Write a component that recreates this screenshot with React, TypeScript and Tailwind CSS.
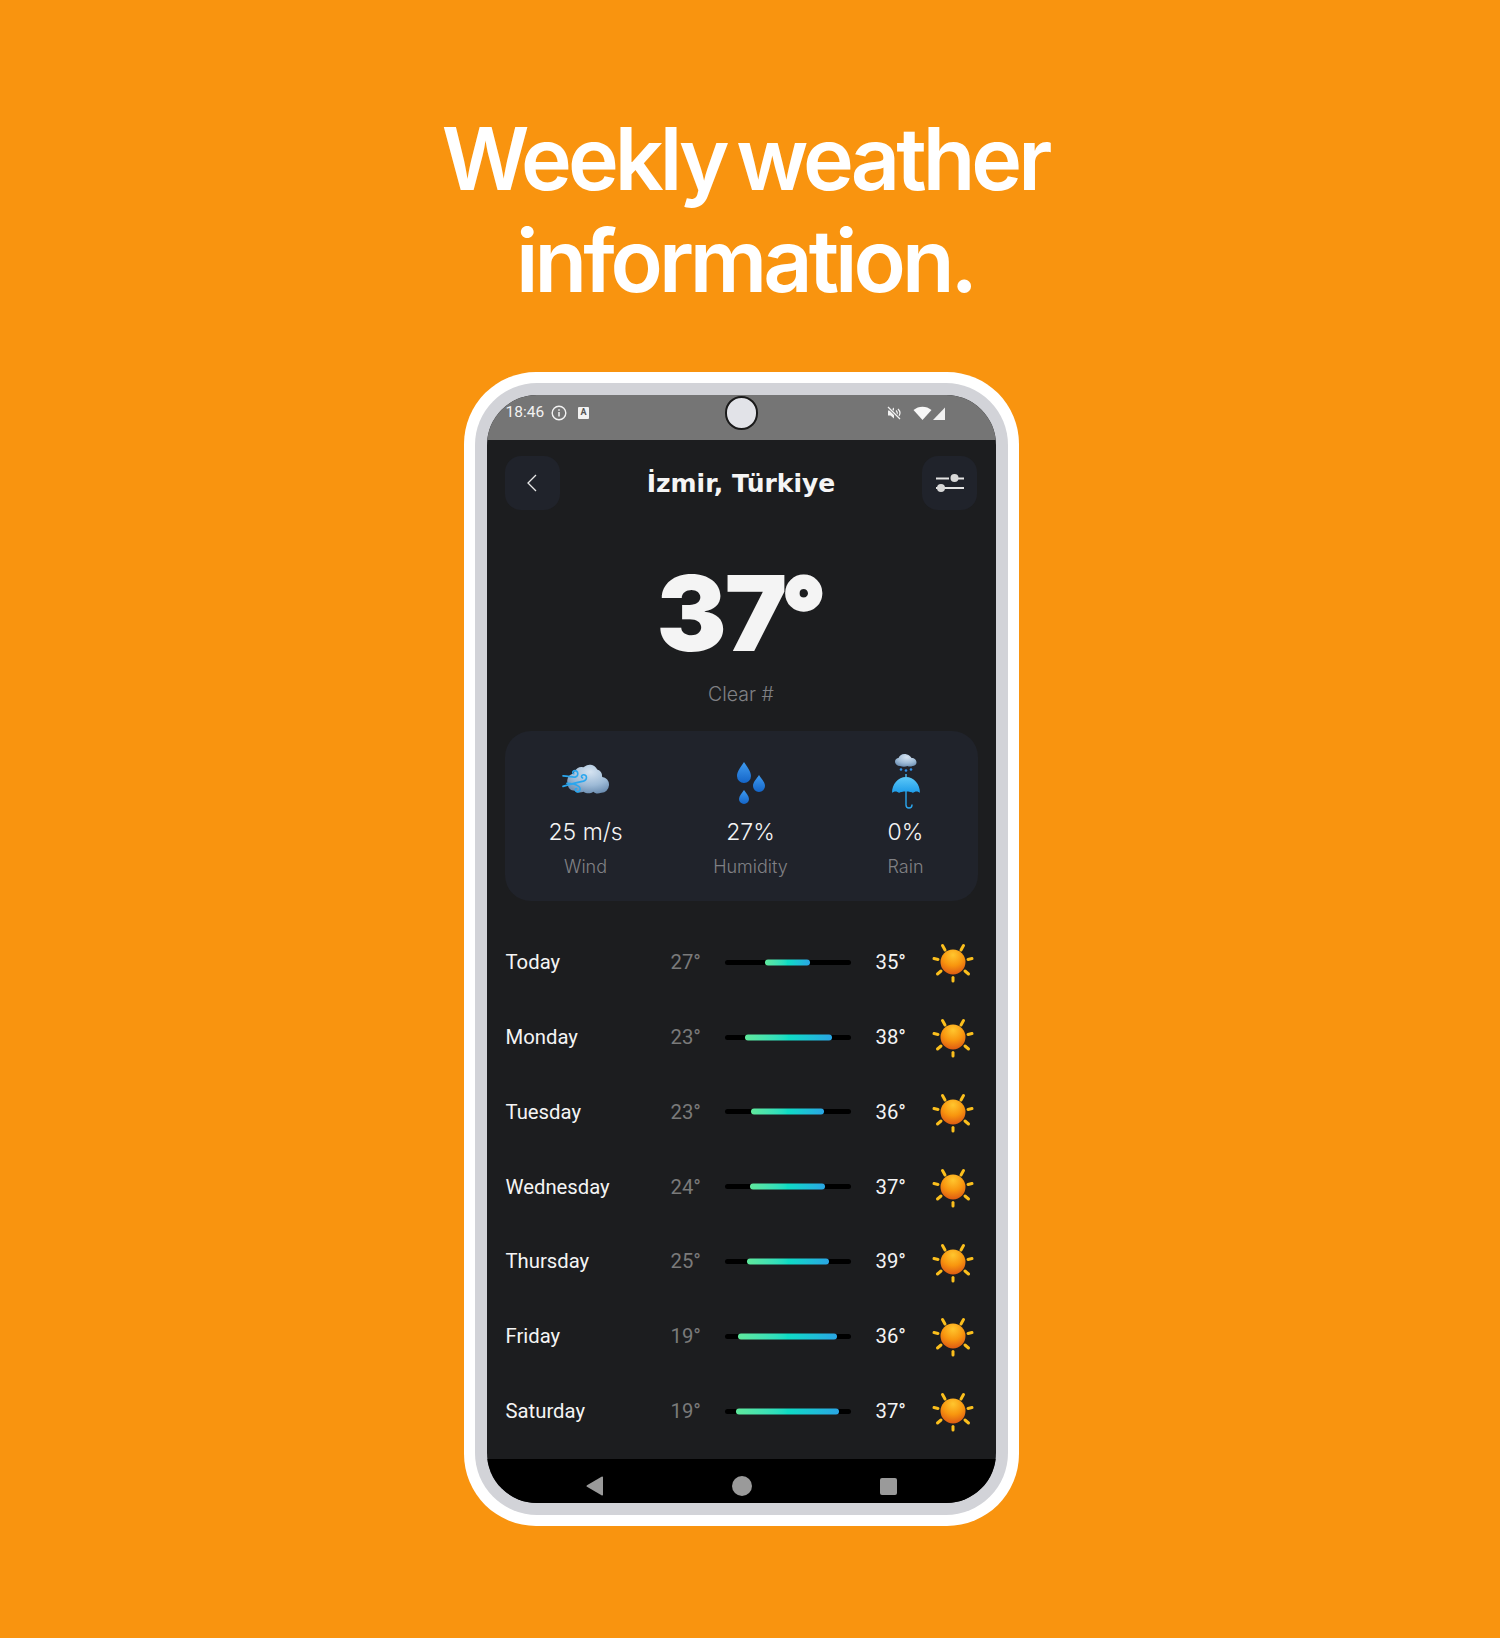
const days = [
  { name: "Today", min: "27°", max: "35°", from: 32.5, to: 68 },
  { name: "Monday", min: "23°", max: "38°", from: 16, to: 85 },
  { name: "Tuesday", min: "23°", max: "36°", from: 21, to: 79 },
  { name: "Wednesday", min: "24°", max: "37°", from: 20, to: 80 },
  { name: "Thursday", min: "25°", max: "39°", from: 17.5, to: 83 },
  { name: "Friday", min: "19°", max: "36°", from: 11, to: 89.5 },
  { name: "Saturday", min: "19°", max: "37°", from: 9, to: 91 },
];

const Gradients = () => (
  <svg width="0" height="0" className="absolute">
    <defs>
      <radialGradient id="sunFill" cx="0.5" cy="0.22" r="0.85">
        <stop offset="0" stopColor="#ffc62e" />
        <stop offset="0.5" stopColor="#f8960f" />
        <stop offset="1" stopColor="#d94f14" />
      </radialGradient>
      <radialGradient id="cloudFill" cx="0.55" cy="0.25" r="0.85">
        <stop offset="0" stopColor="#d5e3f1" />
        <stop offset="0.55" stopColor="#9dbad6" />
        <stop offset="1" stopColor="#5f82a8" />
      </radialGradient>
      <linearGradient id="dropFill" x1="0" y1="0" x2="0" y2="1">
        <stop offset="0" stopColor="#3f9bf0" />
        <stop offset="1" stopColor="#1465c8" />
      </linearGradient>
      <linearGradient id="umbrellaFill" x1="0" y1="0" x2="0" y2="1">
        <stop offset="0" stopColor="#5cc8f8" />
        <stop offset="1" stopColor="#1d9be8" />
      </linearGradient>
    </defs>
  </svg>
);

const Sun = () => (
  <svg width="42" height="42" viewBox="0 0 42 42" fill="none">
    <g stroke="#fbbf1d" strokeWidth="3" strokeLinecap="round">
      <path d="M21 36.500V40" />
      <path d="M10.500 4.500L13 9" />
      <path d="M31.500 4.500L29 9" />
      <path d="M2 17.500L6 18.500" />
      <path d="M40 17.500L36 18.500" />
      <path d="M5.500 33L9 30" />
      <path d="M36.500 33L33 30" />
    </g>
    <circle cx="21" cy="21" r="12.500" fill="url(#sunFill)" />
  </svg>
);

const WindCloud = () => (
  <svg className="mb-[5px]" width="47" height="36" viewBox="0 0 48 34" fill="none" preserveAspectRatio="none">
    <path d="M6 22a7 7 0 0 1 6-10 8 8 0 0 1 10-6 9 9 0 0 1 14 2 7 7 0 0 1 5 7 7.500 7.500 0 0 1-1 15c-3 1-6 1-8-1-3 2-7 2-10 0-3 1-7 1-9-1-4 0-7-2-7-6z" fill="url(#cloudFill)" />
    <g stroke="#2aa6ee" strokeWidth="1.600" strokeLinecap="round">
      <path d="M1 14c6 0 10 2 13 1 3-1 3-6-1-6-2 0-3 2-1 3" />
      <path d="M1 24c6-2 16-4 21-5 4-1 4-6 0-6-2 0-3 2-1 3" />
      <path d="M5 21c6 0 9 1 12 3 3 2 1 6-2 5-2-1-2-3 0-3" />
    </g>
  </svg>
);

const Drops = () => (
  <svg className="mt-[4px]" width="30" height="44" viewBox="0 0 30 44" fill="url(#dropFill)">
    <path d="M8 1c3 5 7 9 7 14a7 7 0 0 1-14 0C1 10 5 6 8 1z" />
    <path d="M23 14c2.500 4 6 7 6 11a6 6 0 0 1-12 0c0-4 3.500-7 6-11z" />
    <path d="M8 29c2 3 5 6 5 9a5 5 0 0 1-10 0c0-3 3-6 5-9z" />
  </svg>
);

const Umbrella = () => (
  <svg width="30" height="56" viewBox="0 0 30 56" fill="none">
    <path d="M9 13c-3 0-5-2-5-4.500 0-2 2-3.500 3.500-3.500C8.500 2 12 0 16 1.500c2 .5 4 2 4.500 3.500 3 0 5 2 5 4.500 0 2-2 3.500-4 3.500-2 1-4 .5-5 0-2 1-5 1-7.500 0z" fill="url(#cloudFill)" />
    <g fill="#2f8fe8">
      <circle cx="10" cy="16.500" r="1.300" />
      <circle cx="15" cy="17.500" r="1.300" />
      <circle cx="20" cy="16.500" r="1.300" />
    </g>
    <path d="M15 21v3" stroke="#4bb9f4" strokeWidth="1.400" />
    <path d="M1 40c0-9 6-16 14-16s14 7 14 16c-2-2-5-2-7 0-2-2-12-2-14 0-2-2-5-2-7 0z" fill="url(#umbrellaFill)" />
    <path d="M15 38v14c0 4 6 4 6 0" stroke="#2aa6ee" strokeWidth="1.400" strokeLinecap="round" />
  </svg>
);

const StatusBar = () => (
  <div className="relative h-[45px] bg-[#757575] flex items-center pl-[19px] pr-[50px] pb-[10px] text-white font-['Roboto',sans-serif]">
    <span className="text-[15.500px] text-[#f2f2f2]">18:46</span>
    <svg className="ml-[7px]" width="16" height="16" viewBox="0 0 16 16" fill="none">
      <circle cx="8" cy="8" r="6.800" stroke="#f2f2f2" strokeWidth="1.400" />
      <path d="M8 7v4.500M8 4.200v1.500" stroke="#f2f2f2" strokeWidth="1.500" />
    </svg>
    <div className="ml-[11px] w-[11px] h-[12px] bg-[#f2f2f2] rounded-[1px] flex items-center justify-center text-[9px] leading-none font-bold text-[#555]">
      A
    </div>
    <div className="ml-auto flex items-center">
      <svg width="16" height="16" viewBox="0 0 16 16" fill="#f2f2f2">
        <path d="M2 5.500h2.500L8 2.500v11l-3.500-3H2z" />
        <path d="M10 5.500c1.500 1.500 1.500 3.500 0 5M12 4c2.500 2.500 2.500 5.500 0 8" stroke="#f2f2f2" strokeWidth="1.200" fill="none" />
        <path d="M2 2l12 12" stroke="#757575" strokeWidth="3" />
        <path d="M2 2l12 12" stroke="#f2f2f2" strokeWidth="1.200" />
      </svg>
      <svg className="ml-[11px]" width="19" height="14" viewBox="0 0 19 14" fill="#f8f8f8">
        <path d="M0.500 4C5.500-.5 13.500-.5 18.500 4L9.500 14z" />
      </svg>
      <svg className="ml-[1px]" width="13" height="14" viewBox="0 0 13 14" fill="#f2f2f2">
        <path d="M0 14L12 1.500V14z" />
      </svg>
    </div>
  </div>
);

const Header = () => (
  <div className="mt-[16px] px-[18px] flex items-center justify-between">
    <button className="w-[55px] h-[54px] rounded-[16px] bg-[#20232b] flex items-center justify-center">
      <svg width="14" height="20" viewBox="0 0 14 20" fill="none">
        <path d="M11 2L3 10l8 8" stroke="#e8e8e8" strokeWidth="1.300" />
      </svg>
    </button>
    <h2 className="font-['DejaVu_Sans',sans-serif] font-bold text-[25px] leading-none text-[#f5f5f5]">
      İzmir, Türkiye
    </h2>
    <button className="w-[55px] h-[54px] rounded-[16px] bg-[#20232b] flex items-center justify-center">
      <svg width="30" height="22" viewBox="0 0 30 22" fill="none">
        <path d="M1 6.500h13M22 6.500h7M8 16h21M1 16h3" stroke="#e4e4e4" strokeWidth="2" />
        <circle cx="19.500" cy="6" r="4" fill="#d8d8d8" />
        <circle cx="6" cy="16" r="4" fill="#d8d8d8" />
      </svg>
    </button>
  </div>
);

const Stat = ({ icon, value, label, className }: { icon: React.ReactNode; value: string; label: string; className: string }) => (
  <div className={`w-[100px] flex flex-col items-center ${className}`}>
    <div className="h-[56px] flex items-center justify-center">{icon}</div>
    <div className="mt-[9px] text-[23px] leading-[28px] text-[#f4f4f4] font-['Inter',sans-serif] font-light">{value}</div>
    <div className="mt-[7px] text-[18px] leading-[28px] text-[#808185] font-['Inter',sans-serif] font-light whitespace-nowrap">{label}</div>
  </div>
);

const DayRow = ({ day }: { day: (typeof days)[number] }) => (
  <div className="h-[74.800px] flex items-center pl-[19px] font-['Roboto',sans-serif] text-[20.300px]">
    <span className="w-[165px] text-[#f4f4f4]">{day.name}</span>
    <span className="w-[54px] text-[#7a7a7a]">{day.min}</span>
    <div className="w-[126px] h-[5px] rounded-full bg-black">
      <div
        className="h-[6px] -translate-y-[0.5px] rounded-full bg-gradient-to-r from-[#5fe89c] via-[#0fdcc4] to-[#2aa5e4]"
        style={{ marginLeft: `${day.from}%`, width: `${day.to - day.from}%` }}
      />
    </div>
    <span className="ml-[25px] w-[56px] text-[#f4f4f4]">{day.max}</span>
    <Sun />
  </div>
);

const NavBar = () => (
  <div className="h-[44px] bg-black flex items-center justify-center relative">
    <div className="w-[311px] flex items-center justify-between pt-[10px]">
      <svg width="18" height="20" viewBox="0 0 18 20" fill="#9a9a9a">
        <path d="M17 1.500v17a1 1 0 0 1-1.500.8L1 10.800a1 1 0 0 1 0-1.600L15.500.700a1 1 0 0 1 1.500.8z" />
      </svg>
      <div className="w-[20px] h-[20px] rounded-full bg-[#9a9a9a]" />
      <div className="w-[17px] h-[17px] rounded-[2px] bg-[#9a9a9a]" />
    </div>
  </div>
);

export default function App() {
  return (
    <div className="min-h-[1638px] bg-[#f9940f] flex flex-col items-center pr-[18px] font-['Inter',sans-serif]">
      <Gradients />
      <h1 className="ml-[8px] mt-[108px] text-center text-white font-semibold text-[86px] leading-[102px] tracking-[-4px] [word-spacing:-7px]">
        Weekly weather
        <br />
        information.
      </h1>
      <div className="mt-[60px] w-[555px] h-[1154px] rounded-[72px] bg-white p-[11px]">
        <div className="h-full rounded-[62px] bg-[#d2d3d8] p-[12px]">
          <div className="relative h-full rounded-[50px] overflow-hidden bg-[#1c1d1f] flex flex-col">
            <StatusBar />
            <div className="absolute left-[238px] top-[1px] w-[33px] h-[34px] rounded-full bg-[#e2e3e8] border-2 border-[#1a1a1a]" />
            <Header />
            <div className="h-[221px] flex flex-col items-center">
              <div className="mt-[59px] flex items-start text-[#f4f4f4] font-['Inter',sans-serif] font-black leading-none">
                <span className="text-[105px] leading-[88px] tracking-[-2px]">37</span>
                <span className="mt-[6px] text-[94px] leading-[72px] -ml-[3px] [-webkit-text-stroke:3px_#f4f4f4]">°</span>
              </div>
              <div className="mt-[23px] text-[19.500px] leading-[28px] font-light text-[#808185]">Clear #</div>
            </div>
            <div className="mx-[18px] h-[170px] rounded-[26px] bg-[#20232b] flex pt-[22px] pl-[31px]">
              <Stat icon={<WindCloud />} value="25 m/s" label="Wind" className="" />
              <Stat icon={<Drops />} value="27%" label="Humidity" className="ml-[65px]" />
              <Stat icon={<Umbrella />} value="0%" label="Rain" className="ml-[55px]" />
            </div>
            <div className="mt-[24px] flex-1">
              {days.map((day) => (
                <DayRow key={day.name} day={day} />
              ))}
            </div>
            <NavBar />
          </div>
        </div>
      </div>
    </div>
  );
}
